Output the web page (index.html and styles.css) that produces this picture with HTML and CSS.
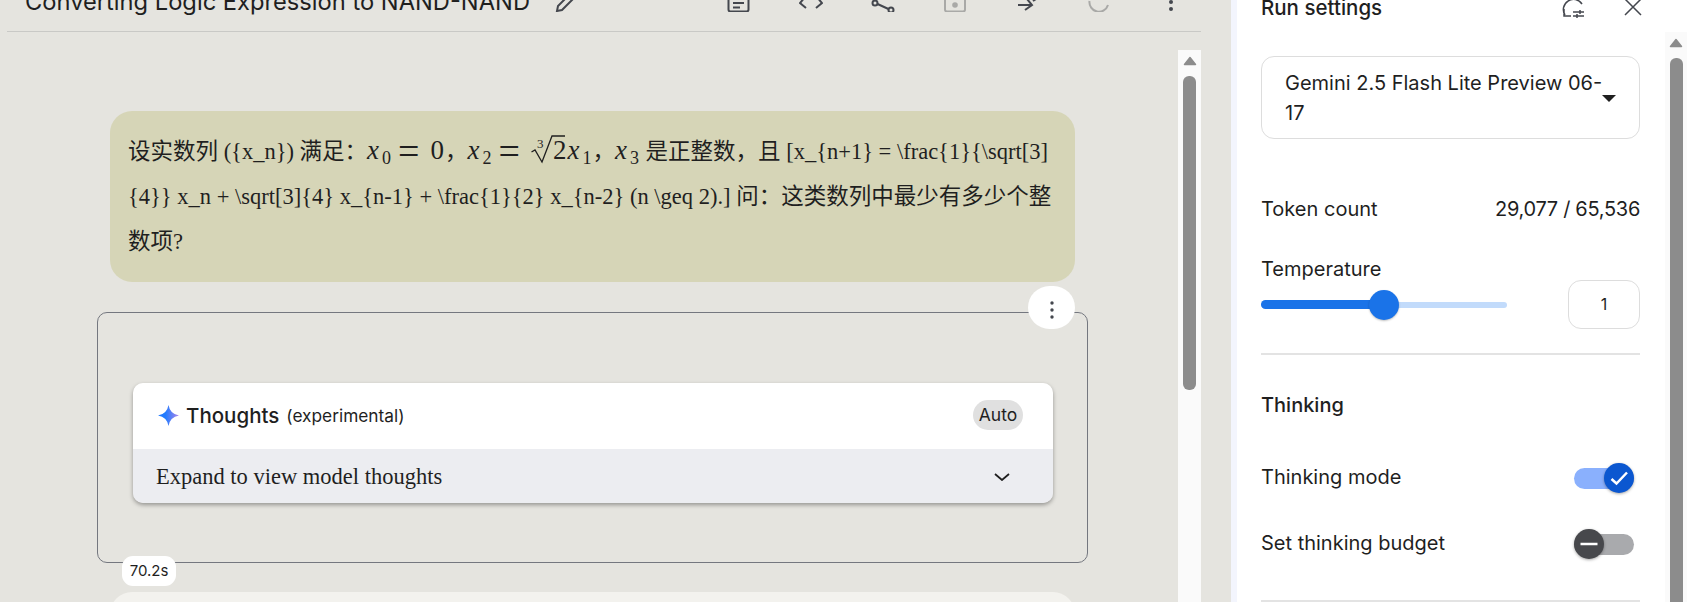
FILE: index.html
```html
<!DOCTYPE html>
<html lang="en">
<head>
    <meta charset="UTF-8">
    <meta name="viewport" content="width=device-width, initial-scale=1.0">
    <title>Run settings</title>
    <link rel="stylesheet" href="styles.css">
</head>
<body>
    <div id="app">
        <main class="main">
            <header class="top-bar">
                <h1 class="chat-title">Converting Logic Expression to NAND-NAND</h1>
                <svg class="icon icon-pencil" viewBox="0 0 24 24"><path d="M4 23l1-5L16 7l4 4L9 22z"/></svg>
                <div class="toolbar">
                    <span class="tool"><svg class="icon" viewBox="0 0 24 24"><rect x="1.500" y="2" width="20" height="21.500" rx="2"/><path d="M6 15h11M6 19.500h7"/></svg></span>
                    <span class="tool"><svg class="icon" viewBox="0 0 24 24"><path d="M7 8l-6 7 6 5M17 8l6 7-6 5"/></svg></span>
                    <span class="tool"><svg class="icon" viewBox="0 0 24 24"><circle cx="4" cy="15" r="2.500"/><circle cx="20" cy="22" r="2.500"/><path d="M6.500 16l11 5"/></svg></span>
                    <span class="tool"><svg class="icon icon-off" viewBox="0 0 24 24"><rect x="2" y="2" width="20" height="21.500" rx="2"/><circle class="fill" cx="12" cy="17" r="2.800"/></svg></span>
                    <span class="tool"><svg class="icon" viewBox="0 0 24 24"><path d="M3 17h14M10 22l7-5-5-6M18 13l3-2"/></svg></span>
                    <span class="tool"><svg class="icon icon-off" viewBox="0 0 24 24"><path d="M21 17a9.500 9.500 0 0 1-18.500-4"/></svg></span>
                    <span class="tool"><svg class="icon" viewBox="0 0 24 24"><circle class="fill dark" cx="12" cy="14" r="2"/><circle class="fill dark" cx="12" cy="21" r="2"/></svg></span>
                </div>
            </header>

            <div class="chat-row">
                <div class="chat">
                    <div class="bubble">
                        设实数列 ({x_n}) 满足：<span class="math"><i>x</i><sub>0</sub><b>=</b>0</span>，<span class="math"><i>x</i><sub>2</sub><b>=</b><span class="root"><svg viewBox="0 0 34 29"><path d="M0.500 17L4 15l7 12L21 1h13"/></svg><sup>3</sup>2</span><i>x</i><sub>1</sub></span>，<span class="math"><i>x</i><sub>3</sub></span> 是正整数，且 [x_{n+1} = \frac{1}{\sqrt[3]<br>
                        {4}} x_n + \sqrt[3]{4} x_{n-1} + \frac{1}{2} x_{n-2} (n \geq 2).] 问：这类数列中最少有多少个整<br>
                        数项?
                    </div>

                    <div class="turn">
                        <button class="turn-menu" aria-label="More"><svg viewBox="0 0 6 20"><circle cx="3" cy="3" r="1.700"/><circle cx="3" cy="10" r="1.700"/><circle cx="3" cy="17" r="1.700"/></svg></button>
                        <div class="thoughts">
                            <div class="thoughts-head">
                                <svg class="star" viewBox="0 0 21 21">
                                    <defs><linearGradient id="starFill" x1="0" y1="0.5" x2="1" y2="0.5"><stop offset="0.35" stop-color="#217bfe"/><stop offset="1" stop-color="#ac87eb"/></linearGradient></defs>
                                    <path fill="url(#starFill)" d="M10.500 0Q12 9 21 10.500 12 12 10.500 21 9 12 0 10.500 9 9 10.500 0z"/>
                                </svg>
                                <span class="thoughts-name">Thoughts</span>
                                <span class="thoughts-note">(experimental)</span>
                                <span class="auto-chip">Auto</span>
                            </div>
                            <div class="thoughts-foot">
                                <span>Expand to view model thoughts</span>
                                <svg class="chevron" viewBox="0 0 16 8"><path d="M1 1l7 6 7-6"/></svg>
                            </div>
                        </div>
                        <span class="time-chip">70.2s</span>
                    </div>

                    <div class="bubble-next"></div>
                </div>
                <div class="scrollbar">
                    <svg class="arrow" viewBox="0 0 14 10"><path d="M7 1.500L12.500 8.500H1.500z"/></svg>
                    <div class="thumb thumb-main"></div>
                </div>
            </div>
        </main>

        <aside class="panel">
            <div class="panel-head">
                <h2 class="panel-title">Run settings</h2>
                <svg class="icon icon-reset" viewBox="0 0 24 24"><path d="M21 10A10 10 0 0 0 4 21M3 15v7h7M12 18h11M12 22h11M19 16v4M16 20v4"/></svg>
                <svg class="icon icon-close" viewBox="0 0 18 18"><path d="M1 -1L17 15M17 -1L1 15"/></svg>
            </div>
            <div class="panel-row">
                <div class="settings">
                    <div class="model-select">
                        <span class="model-name">Gemini 2.5 Flash Lite Preview 06-17</span>
                        <span class="caret"></span>
                    </div>
                    <div class="token-row"><span>Token count</span><span class="token-value">29,077 / 65,536</span></div>
                    <div class="temp-label">Temperature</div>
                    <div class="slider-row">
                        <div class="slider"><div class="slider-fill"></div><div class="slider-thumb"></div></div>
                        <div class="num-box">1</div>
                    </div>
                    <hr class="rule rule-first">
                    <div class="section-name">Thinking</div>
                    <div class="switch-row switch-row-first">
                        <span>Thinking mode</span>
                        <div class="switch switch-on">
                            <div class="knob"><svg viewBox="0 0 20 20"><path d="M2.500 11l5 4.500L18 4.500"/></svg></div>
                        </div>
                    </div>
                    <div class="switch-row">
                        <span>Set thinking budget</span>
                        <div class="switch switch-off">
                            <div class="knob"><svg viewBox="0 0 20 20"><path d="M1.500 10h17"/></svg></div>
                        </div>
                    </div>
                    <hr class="rule rule-last">
                </div>
                <div class="scrollbar scrollbar-panel">
                    <svg class="arrow" viewBox="0 0 14 10"><path d="M7 1.500L12.500 8.500H1.500z"/></svg>
                    <div class="thumb"></div>
                </div>
            </div>
        </aside>
    </div>
</body>
</html>
```

FILE: styles.css
```css
html, body {
    height: 100%;
    margin: 0;
    padding: 0;
    overflow: hidden;
    background-color: #ffffff;
    font-family: Inter, "Noto Sans", sans-serif;
    color: #1f1f1f;
}
#app {
    display: flex;
    height: 602px;
}

/* left side */
.main {
    flex: 0 0 1231px;
    box-sizing: border-box;
    padding: 0 30px 0 7px;
    background-color: #e5e4df;
    display: flex;
    flex-direction: column;
    min-width: 0;
}
.top-bar {
    flex: 0 0 32px;
    box-sizing: border-box;
    display: flex;
    align-items: flex-end;
    padding: 0 0 19px 18px;
    border-bottom: 1px solid #c9c9c6;
    overflow: hidden;
}
.chat-title {
    margin: 0 0 -4px;
    font-size: 23.7px;
    font-weight: 400;
    line-height: 28px;
    white-space: nowrap;
}
.icon {
    width: 24px;
    height: 24px;
    flex: none;
    fill: none;
    stroke: #44474e;
    stroke-width: 2;
}
.icon-off {
    stroke: #a9a9a7;
}
.icon .fill {
    fill: #a9a9a7;
    stroke: none;
}
.icon .dark {
    fill: #44474e;
}
.icon-pencil {
    margin-left: 23px;
}
.toolbar {
    margin-left: auto;
    margin-right: -6px;
    display: flex;
}
.tool {
    width: 72px;
    display: flex;
    justify-content: center;
}
.chat-row {
    flex: 1;
    display: flex;
    margin-top: 18px;
    min-height: 0;
}
.chat {
    flex: 1;
    padding-top: 61px;
    overflow: hidden;
    min-width: 0;
}
.bubble {
    box-sizing: border-box;
    width: 965px;
    height: 171px;
    margin-left: 103px;
    padding: 16.5px 18px;
    border-radius: 22px;
    background-color: #d6d5b7;
    font-family: "Liberation Serif", "Noto Sans CJK SC", serif;
    font-size: 22.5px;
    line-height: 45px;
    white-space: nowrap;
}
.math {
    font-size: 27px;
    margin-right: 1px;
}
.math i {
    font-style: italic;
}
.math b {
    font-weight: 400;
    font-size: 38px;
    line-height: 0;
    vertical-align: -5px;
    margin: 0 11px 0 7px;
}
.math sub {
    font-size: 18px;
    line-height: 0;
    vertical-align: -5px;
    margin-left: 3px;
}
.root {
    display: inline-block;
    position: relative;
    padding-left: 22px;
    margin-right: 1px;
    line-height: 1;
}
.root svg {
    position: absolute;
    left: 0;
    top: -2px;
    width: 34px;
    height: 29px;
    fill: none;
    stroke: #1f1f1f;
    stroke-width: 1.3;
}
.root sup {
    position: absolute;
    left: 6px;
    top: 0;
    font-size: 13px;
    line-height: 1;
}
.turn {
    position: relative;
    box-sizing: border-box;
    width: 991px;
    height: 251px;
    margin: 30px 0 0 90px;
    padding: 70px 34px 0 35px;
    border: 1px solid #74777f;
    border-radius: 10px;
}
.turn-menu {
    position: absolute;
    top: -27px;
    right: 12px;
    width: 47px;
    height: 43px;
    padding: 0;
    border: none;
    border-radius: 22px;
    background-color: #ffffff;
    display: flex;
    align-items: center;
    justify-content: center;
}
.turn-menu svg {
    width: 6px;
    height: 20px;
    margin-top: 5px;
    fill: #44474e;
}
.thoughts {
    border-radius: 10px;
    overflow: hidden;
    box-shadow: 0 2px 4px rgba(0, 0, 0, 0.35);
}
.thoughts-head {
    height: 66px;
    box-sizing: border-box;
    padding: 0 30px 2px 25px;
    background-color: #ffffff;
    display: flex;
    align-items: center;
}
.star {
    width: 21px;
    height: 21px;
    margin-right: 7px;
}
.thoughts-name {
    font-size: 20.5px;
    font-weight: 500;
}
.thoughts-note {
    font-size: 17.3px;
    margin-left: 7px;
}
.auto-chip {
    margin-left: auto;
    width: 50px;
    height: 30px;
    border-radius: 15px;
    background-color: #e0e0e0;
    font-size: 17.5px;
    line-height: 30px;
    text-align: center;
}
.thoughts-foot {
    height: 54px;
    box-sizing: border-box;
    padding: 2px 43px 0 23px;
    background-color: #ecedf1;
    font-family: "Liberation Serif", serif;
    font-size: 22.5px;
    display: flex;
    align-items: center;
    justify-content: space-between;
}
.chevron {
    width: 16px;
    height: 8px;
    fill: none;
    stroke: #1f1f1f;
    stroke-width: 1.8;
}
.time-chip {
    position: absolute;
    left: 24px;
    top: 243px;
    width: 54px;
    height: 30px;
    border-radius: 11px;
    background-color: #ffffff;
    font-size: 15px;
    line-height: 30px;
    text-align: center;
}
.bubble-next {
    height: 60px;
    width: 965px;
    margin: 29px 0 0 103px;
    border-radius: 22px 22px 0 0;
    background-color: #f3f2ee;
}
.scrollbar {
    flex: 0 0 23px;
    background-color: #fafafa;
    display: flex;
    flex-direction: column;
    align-items: center;
    padding-top: 6px;
    box-sizing: border-box;
}
.arrow {
    width: 14px;
    height: 10px;
    fill: #8c8c8c;
    stroke: #8c8c8c;
    stroke-width: 1.5;
    stroke-linejoin: round;
}
.thumb {
    width: 13px;
    flex: 1;
    margin-top: 10px;
    border-radius: 6px 6px 0 0;
    background-color: #8c8c8c;
}
.thumb-main {
    flex: none;
    height: 314px;
    border-radius: 6px;
}

/* right side */
.panel {
    flex: 1;
    min-width: 0;
    box-sizing: border-box;
    padding: 0 5px 0 24px;
    border-left: 6px solid #f3f5fd;
    display: flex;
    flex-direction: column;
    font-size: 20px;
}
.panel-head {
    flex: 0 0 32px;
    display: flex;
    align-items: flex-end;
    overflow: hidden;
    padding-bottom: 14px;
    box-sizing: border-box;
}
.panel-title {
    margin: 0 0 -4px;
    font-size: 20.5px;
    font-weight: 500;
    line-height: 28px;
}
.icon-reset {
    margin-left: auto;
    stroke-width: 1.5;
}
.icon-close {
    width: 18px;
    height: 18px;
    margin: 0 45px 0 39px;
    stroke-width: 1.5;
}
.panel-row {
    flex: 1;
    display: flex;
    min-height: 0;
}
.settings {
    width: 379px;
    margin-right: 25px;
    padding-top: 24px;
    overflow: hidden;
}
.model-select {
    box-sizing: border-box;
    height: 83px;
    padding: 11px 23px 0;
    border: 1px solid #dddddd;
    border-radius: 13px;
    line-height: 30px;
    position: relative;
}
.model-name {
    display: block;
    width: 320px;
}
.caret {
    position: absolute;
    right: 23px;
    top: 38px;
    width: 0;
    height: 0;
    border-left: 7px solid transparent;
    border-right: 7px solid transparent;
    border-top: 7px solid #1f1f1f;
}
.token-row {
    display: flex;
    justify-content: space-between;
    margin-top: 55px;
    line-height: 30px;
}
.token-value {
    letter-spacing: -0.3px;
}
.temp-label {
    margin-top: 30px;
    line-height: 30px;
    height: 26px;
}
.slider-row {
    display: flex;
    align-items: center;
    justify-content: space-between;
    height: 49px;
}
.slider {
    position: relative;
    width: 246px;
    height: 6px;
    border-radius: 3px;
    background-color: #c2dbfb;
}
.slider-fill {
    position: absolute;
    left: 0;
    top: -2px;
    width: 123px;
    height: 9px;
    border-radius: 5px;
    background-color: #1a73e8;
}
.slider-thumb {
    position: absolute;
    left: 108px;
    top: -12px;
    width: 30px;
    height: 30px;
    border-radius: 50%;
    background-color: #1a73e8;
    box-shadow: 0 1px 2px rgba(0, 0, 0, 0.25);
}
.num-box {
    box-sizing: border-box;
    width: 72px;
    height: 49px;
    border: 1px solid #dddddd;
    border-radius: 13px;
    font-size: 16px;
    line-height: 47px;
    text-align: center;
}
.rule {
    margin: 24px 0 0;
    border: none;
    border-top: 2px solid #e3e3e3;
}
.section-name {
    margin-top: 36px;
    line-height: 28px;
    font-weight: 500;
}
.switch-row {
    display: flex;
    align-items: center;
    justify-content: space-between;
    height: 30px;
    margin-top: 36px;
}
.switch-row > span {
    margin-top: -2px;
}
.switch-row-first {
    margin-top: 44px;
}
.switch {
    position: relative;
    width: 60px;
    height: 21px;
    margin-right: 6px;
    border-radius: 11px;
}
.switch-on {
    background-color: #8ab0fd;
}
.switch-off {
    background-color: #a9aaad;
}
.knob {
    position: absolute;
    top: -5px;
    width: 30px;
    height: 30px;
    border-radius: 50%;
    box-shadow: 0 1px 3px rgba(0, 0, 0, 0.35);
    display: flex;
    align-items: center;
    justify-content: center;
}
.switch-on .knob {
    right: 0;
    background-color: #0b57d0;
}
.switch-off .knob {
    left: 0;
    background-color: #47484c;
}
.knob svg {
    width: 20px;
    height: 20px;
    fill: none;
    stroke: #ffffff;
    stroke-width: 2.5;
}
.rule-last {
    margin-top: 41px;
}
.scrollbar-panel {
    flex: 0 0 22px;
}
```
